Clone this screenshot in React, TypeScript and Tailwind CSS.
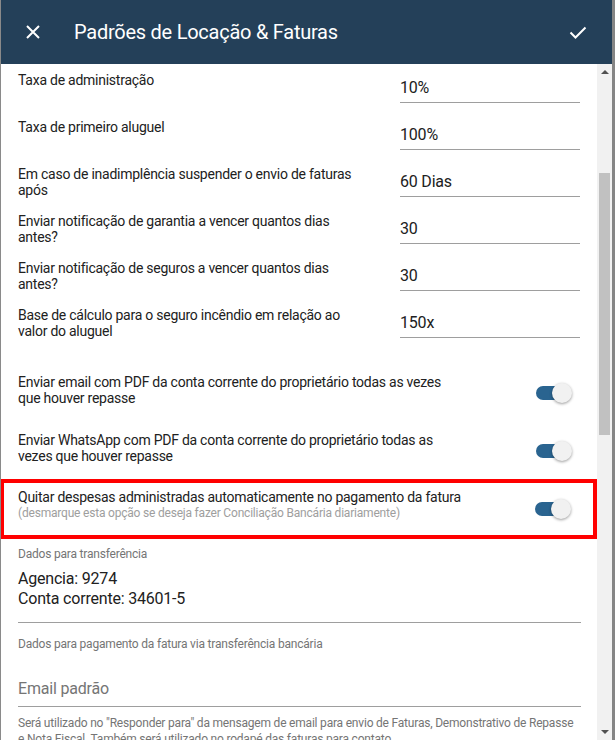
import React from "react";

const font = { fontFamily: "Roboto, 'Liberation Sans', sans-serif" };

type Field = { label: string; value: string };

const fields: Field[] = [
  { label: "Taxa de administração", value: "10%" },
  { label: "Taxa de primeiro aluguel", value: "100%" },
  { label: "Em caso de inadimplência suspender o envio de faturas após", value: "60 Dias" },
  { label: "Enviar notificação de garantia a vencer quantos dias antes?", value: "30" },
  { label: "Enviar notificação de seguros a vencer quantos dias antes?", value: "30" },
  { label: "Base de cálculo para o seguro incêndio em relação ao valor do aluguel", value: "150x" },
];

const Toggle: React.FC = () => (
  <div className="relative w-[36px] h-[20px] shrink-0">
    <div className="absolute left-0 top-[3px] w-[34px] h-[14px] rounded-full bg-[#2a6490]" />
    <div className="absolute left-[16px] top-0 w-[20px] h-[20px] rounded-full bg-[#f1f1f1] shadow-[0_1px_3px_rgba(0,0,0,0.4)]" />
  </div>
);

const FieldRow: React.FC<{ field: Field }> = ({ field }) => (
  <div className="flex h-[47px]">
    <div className="w-[345px] text-[14px] leading-[16px] tracking-[-0.25px] text-[#212121]">{field.label}</div>
    <div className="ml-[37px] w-[180px] mt-[6px] h-[25px] border-b border-[#9e9e9e] text-[16px] leading-[20px] tracking-[-0.2px] text-[#212121]">
      {field.value}
    </div>
  </div>
);

const ToggleRow: React.FC<{ label: string }> = ({ label }) => (
  <div className="pl-[17px] flex h-[58px]">
    <div className="w-[432px] text-[14px] leading-[16px] tracking-[-0.25px] text-[#212121]">{label}</div>
    <div className="ml-[86px] mt-[9px]">
      <Toggle />
    </div>
  </div>
);

export default function App() {
  return (
    <div className="w-[615px] h-[740px] flex overflow-hidden bg-white" style={font}>
      <div className="w-[1px] bg-[#8a8a8a]" />
      <div className="flex flex-col w-[611px]">
        <div className="h-[64px] bg-[#244059] flex items-center text-white shrink-0">
          <svg width="24" height="24" viewBox="0 0 24 24" className="ml-[20px]">
            <path d="M6 6l12 12M18 6L6 18" stroke="white" strokeWidth="2" />
          </svg>
          <div className="ml-[29px] text-[20px] tracking-[-0.25px]">Padrões de Locação &amp; Faturas</div>
          <svg width="24" height="24" viewBox="0 0 24 24" className="ml-auto mr-[22px]">
            <path d="M4.5 12.5l5 5 10-10" stroke="white" strokeWidth="2" fill="none" />
          </svg>
        </div>
        <div className="flex flex-1 min-h-0">
          <div className="w-[596px] overflow-hidden pt-[8px]">
            <div className="pl-[17px]">
              {fields.map((f) => (
                <FieldRow key={f.label} field={f} />
              ))}
            </div>
            <div className="mt-[20px]">
              <ToggleRow label="Enviar email com PDF da conta corrente do proprietário todas as vezes que houver repasse" />
              <ToggleRow label="Enviar WhatsApp com PDF da conta corrente do proprietário todas as vezes que houver repasse" />
            </div>
            <div className="-ml-[1px] mt-[-11px] h-[60px] border-[4px] border-[#ff0000] flex items-start pl-[14px] pt-[6px]">
              <div className="w-[500px]">
                <div className="text-[14px] leading-[16px] tracking-[-0.25px] text-[#212121]">
                  Quitar despesas administradas automaticamente no pagamento da fatura
                </div>
                <div className="text-[12px] leading-[16px] tracking-[-0.2px] text-[#9e9e9e]">
                  (desmarque esta opção se deseja fazer Conciliação Bancária diariamente)
                </div>
              </div>
              <div className="ml-[17px] mt-[10px]">
                <Toggle />
              </div>
            </div>
            <div className="pl-[17px] pr-[16px]">
              <div className="mt-[7px] text-[12px] leading-[16px] tracking-[-0.2px] text-[#757575]">Dados para transferência</div>
              <div className="mt-[7px] text-[16px] leading-[20px] tracking-[-0.2px] text-[#212121] pb-[13px] border-b border-[#9e9e9e]">
                <div>Agencia: 9274</div>
                <div>Conta corrente: 34601-5</div>
              </div>
              <div className="mt-[13px] text-[12px] leading-[16px] tracking-[-0.2px] text-[#757575]">
                Dados para pagamento da fatura via transferência bancária
              </div>
              <div className="mt-[27px] text-[16px] leading-[20px] tracking-[-0.2px] text-[#757575] pb-[7px] border-b border-[#9e9e9e]">
                Email padrão
              </div>
              <div className="mt-[8px] text-[12px] leading-[16px] tracking-[-0.2px] text-[#757575]">
                Será utilizado no "Responder para" da mensagem de email para envio de Faturas, Demonstrativo de Repasse e Nota Fiscal. Também será utilizado no rodapé das faturas para contato.
              </div>
            </div>
          </div>
          <div className="w-[15px] bg-[#f1f1f1] flex flex-col items-center">
            <div className="h-[16px] flex items-center justify-center">
              <div className="w-0 h-0 border-l-[4px] border-r-[4px] border-b-[4px] border-l-transparent border-r-transparent border-b-[#505050]" />
            </div>
            <div className="mt-[93px] w-[11px] h-[262px] bg-[#c1c1c1]" />
            <div className="mt-auto h-[16px] flex items-center justify-center">
              <div className="w-0 h-0 border-l-[4px] border-r-[4px] border-t-[4px] border-l-transparent border-r-transparent border-t-[#505050]" />
            </div>
          </div>
        </div>
      </div>
      <div className="w-[3px] bg-[#858585]" />
    </div>
  );
}
